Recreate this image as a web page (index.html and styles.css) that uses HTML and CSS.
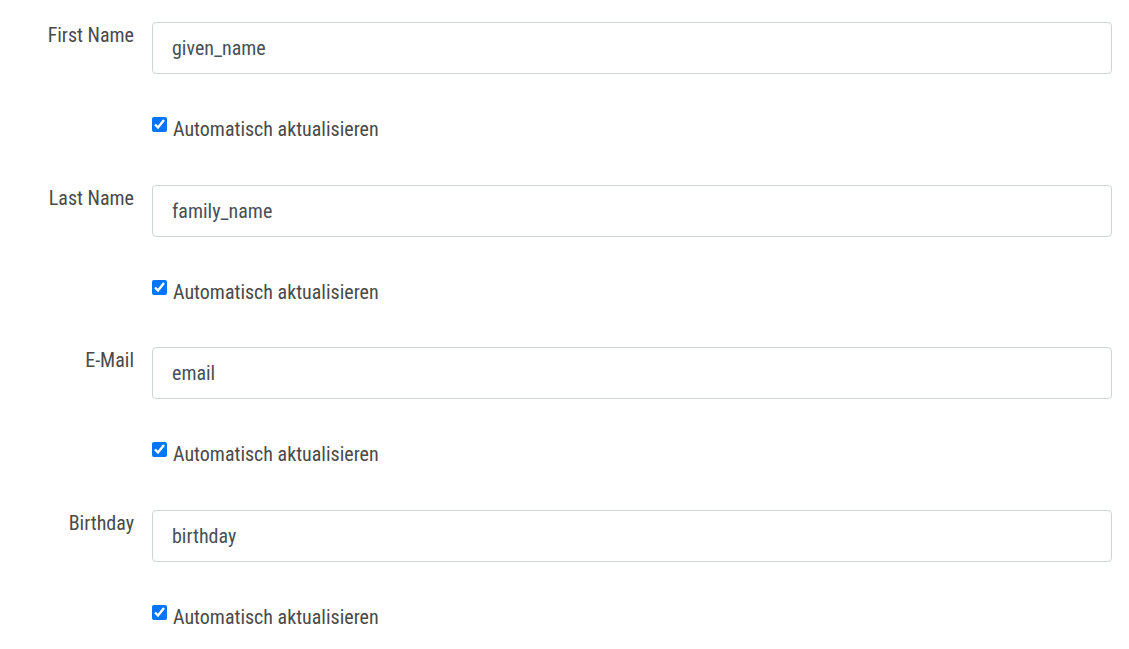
FILE: index.html
```html
<!DOCTYPE html>
<html lang="de">
<head>
<meta charset="utf-8">
<link rel="stylesheet" href="styles.css">
</head>
<body>
<form class="form">
  <div class="group">
    <div class="row">
      <label class="label" for="f1">First Name</label>
      <input class="input" id="f1" type="text" value="given_name">
    </div>
    <label class="check"><input type="checkbox" checked><span>Automatisch aktualisieren</span></label>
  </div>
  <div class="group">
    <div class="row">
      <label class="label" for="f2">Last Name</label>
      <input class="input" id="f2" type="text" value="family_name">
    </div>
    <label class="check"><input type="checkbox" checked><span>Automatisch aktualisieren</span></label>
  </div>
  <div class="group">
    <div class="row">
      <label class="label" for="f3">E-Mail</label>
      <input class="input" id="f3" type="text" value="email">
    </div>
    <label class="check"><input type="checkbox" checked><span>Automatisch aktualisieren</span></label>
  </div>
  <div class="group">
    <div class="row">
      <label class="label" for="f4">Birthday</label>
      <input class="input" id="f4" type="text" value="birthday">
    </div>
    <label class="check"><input type="checkbox" checked><span>Automatisch aktualisieren</span></label>
  </div>
</form>
</body>
</html>
```
FILE: styles.css
```css
html, body {
  margin: 0;
  padding: 0;
  background: #ffffff;
}
body {
  font-family: "Roboto Condensed", "Liberation Sans Narrow", Roboto, sans-serif;
  font-size: 20px;
  color: #4a4a4a;
}
.form {
  padding: 22px 17px 0 0;
}
.group {
  height: 162.5px;
}
.row {
  display: flex;
  align-items: flex-start;
}
.label {
  width: 134px;
  padding-right: 18px;
  text-align: right;
  padding-top: 1px;
  line-height: 24px;
  flex: none;
}
.input {
  flex: 1;
  height: 52px;
  box-sizing: border-box;
  border: 1px solid #ced4da;
  border-radius: 4px;
  padding: 0 19px;
  font: inherit;
  color: #495057;
  outline: none;
}
.check {
  display: flex;
  align-items: flex-start;
  margin: 43px 0 0 152px;
  line-height: 24px;
}
.check input {
  width: 15px;
  height: 15px;
  margin: 0 6px 0 0;
  accent-color: #0075ff;
}
```
